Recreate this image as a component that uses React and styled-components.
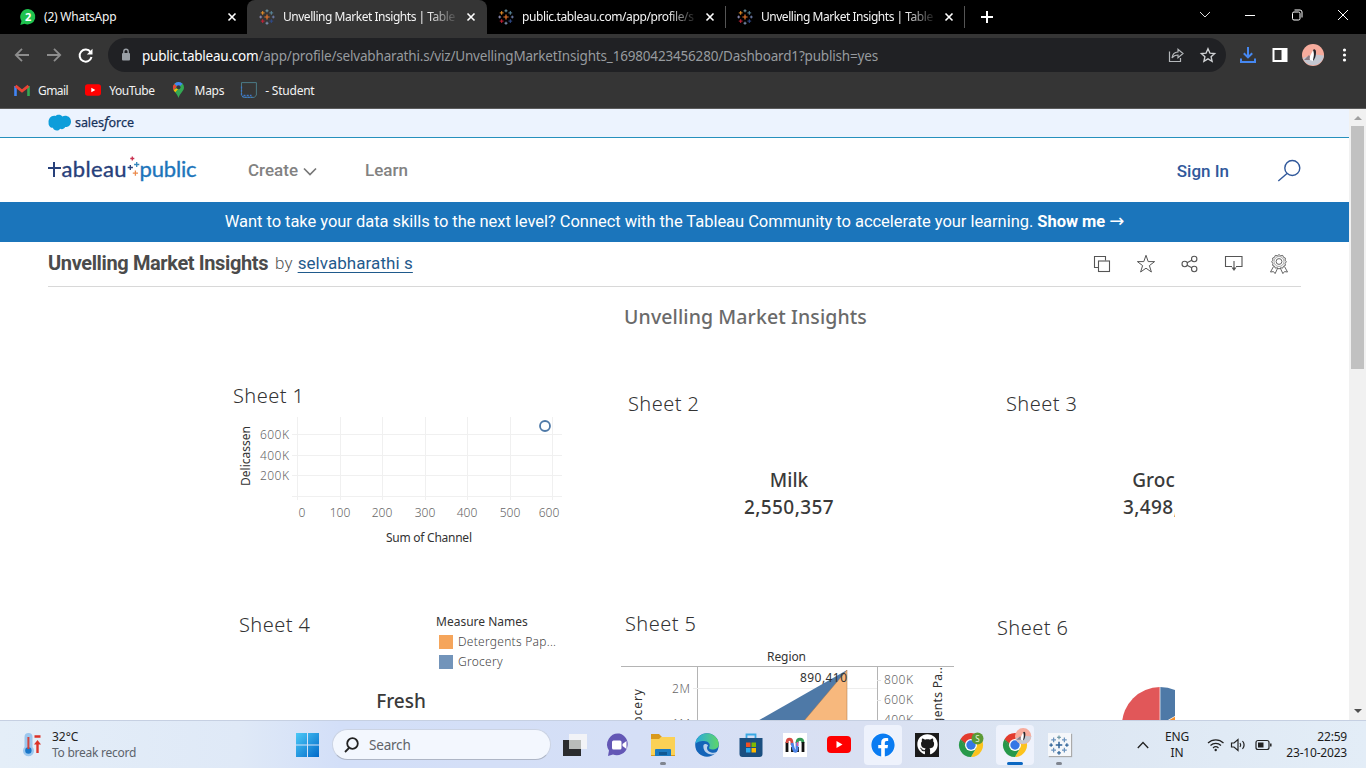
import React from 'react';
import styled, { createGlobalStyle } from 'styled-components';
import { FaGithub, FaFacebook } from 'react-icons/fa';

const ui = '"Noto Sans", "Open Sans", sans-serif';
const benton = 'Roboto, "Liberation Sans", sans-serif';

const Global = createGlobalStyle`
  * { box-sizing: border-box; }
  body { margin: 0; overflow: hidden; background: #fff; font-family: ${ui}; }
  svg { display: block; flex: none; overflow: visible; }
`;

const Screen = styled.div`
  width: 1366px; height: 768px; overflow: hidden;
  display: flex; flex-direction: column;
`;

/* ---------- browser chrome ---------- */
const TabStrip = styled.div`
  height: 34px; background: #000; display: flex; flex: none; color: #fff;
`;
const Tab = styled.div`
  width: ${p => p.$w}px; height: 34px; display: flex; align-items: center;
  padding: 0 ${p => p.$pr}px 0 ${p => p.$pl}px; background: ${p => (p.$active ? '#353535' : '#000')};
  border-radius: ${p => (p.$active ? '8px 8px 0 0' : '0')};
  border-right: ${p => (p.$sep ? '1px solid #4a4a4a' : '0')};
  border-image: ${p => (p.$sep ? 'linear-gradient(#000 20%, #555 20%, #555 80%, #000 80%) 1' : 'none')};
`;
const TabTitle = styled.div`
  flex: 1; margin-left: 8px; font-size: 12px; line-height: 18px; white-space: nowrap;
  letter-spacing: ${p => p.$ls}px; color: #f4f4f4;
  -webkit-mask-image: ${p => (p.$fade ? 'linear-gradient(90deg,#000 145px,transparent 176px)' : 'none')};
`;
const CloseWrap = styled.div`margin-left: 8px; width: 10px; display: flex; justify-content: center;`;
const NewTab = styled.div`width: 44px; display: flex; align-items: center; justify-content: center;`;
const WindowControls = styled.div`
  margin-left: auto; display: flex; height: 29px; align-items: center; gap: 33px; padding-right: 17px;
`;
const Toolbar = styled.div`
  height: 38px; flex: none; background: #353535; display: flex; align-items: flex-end; padding-left: 14px;
`;
const NavIcons = styled.div`display: flex; align-items: center; height: 34px; gap: 16px; width: 94px;`;
const Omnibox = styled.div`
  height: 34px; width: 1118px; border-radius: 17px; background: #202124; display: flex; align-items: center;
  padding: 0 10px 0 12px;
`;
const Url = styled.div`
  margin-left: 10px; padding-top: 1px; font-size: 13.5px; color: #979b9f; letter-spacing: ${p => p.$ls}px; white-space: nowrap; flex: 1;
  b { font-weight: 400; color: #fff; letter-spacing: -0.24px; }
`;
const OmniActions = styled.div`display: flex; gap: 16px; align-items: center;`;
const ToolIcons = styled.div`
  display: flex; align-items: center; height: 34px; gap: 14px; padding-left: 14px;
  svg:first-child { margin-right: 2px; }
`;
const Bookmarks = styled.div`
  height: 37px; flex: none; background: #353535; border-bottom: 1px solid #5b5b5b; display: flex;
  align-items: center; padding: 0 0 0 14px; color: #f2f2f2; font-size: 12px;
`;
const Bookmark = styled.div`
  display: flex; align-items: center; gap: ${p => p.$gap || 8}px; margin-right: ${p => p.$mr}px;
  letter-spacing: ${p => p.$ls || 0}px; white-space: nowrap;
`;

/* ---------- page ---------- */
const Body = styled.div`flex: 1; min-height: 0; display: flex;`;
const Page = styled.div`width: 1349px; background: #fff; display: flex; flex-direction: column; overflow: hidden;`;
const ScrollTrack = styled.div`
  width: 17px; background: #f1f1f1; display: flex; flex-direction: column; align-items: center; padding: 7px 0;
`;
const ScrollThumb = styled.div`width: 13px; height: 243px; background: #c1c1c1; margin: 6px 0 auto; `;
const SalesBar = styled.div`
  height: 29px; flex: none; background: #ecf3fe; border-bottom: 1px solid #2690bd; padding: 5px 0 0 48px;
`;
const Header = styled.div`
  height: 64px; flex: none; display: flex; align-items: center; padding: 0 48px; font-family: ${benton};
`;
const NavLink = styled.div`
  display: flex; align-items: center; gap: 5px; font-size: 17px; font-weight: 500; color: ${p => p.$c || '#828282'};
  margin-left: ${p => p.$ml}; margin-right: ${p => p.$mr || 0}px; padding-top: ${p => p.$pt || 0}px;
`;
const Banner = styled.div`
  height: 40px; flex: none; background: #1b75bb; color: #fff; font: 400 16.5px/39px ${benton};
  text-align: center; letter-spacing: ${p => p.$ls}px; white-space: nowrap;
  b { font-weight: 700; }
  span { font: 400 18px/1 "DejaVu Sans", sans-serif; }
`;
const VizHead = styled.div`
  height: 45px; flex: none; margin: 0 48px; border-bottom: 1px solid #d8d8d8; display: flex; align-items: center;
  font-family: ${benton}; color: #555; padding-right: 12px;
`;
const VizTitle = styled.h1`margin: 0 7px 3px 0; font-size: 20px; line-height: 24px; font-weight: 700; color: #4b4b4b; letter-spacing: ${p => p.$ls}px;`;
const Byline = styled.div`
  font-size: 17px; font-weight: 300; letter-spacing: ${p => p.$ls}px; margin-bottom: 3px;
  a { color: #1f5a8c; font-weight: 400; text-decoration: underline; text-underline-offset: 3px; margin-left: 1px; letter-spacing: 0.07px; }
`;
const VizActions = styled.div`margin-left: auto; display: flex; gap: 25px; align-items: center;`;
const Viz = styled.div`
  width: 1001px; flex: 1; min-height: 0; margin: 0 auto; overflow: hidden; display: flex; flex-direction: column; font-family: ${ui};
`;
const DashTitle = styled.div`
  width: 1143px; height: 82px; flex: none; padding-top: 16px; text-align: center; font-size: 19.5px; font-weight: 500; line-height: 28px; color: #6a6a6a;
  letter-spacing: ${p => p.$ls}px;
`;
const Row = styled.div`display: flex; flex: none; height: ${p => p.$h}px; width: 1143px; padding-left: 46px;`;
const Sheet = styled.section`
  width: ${p => p.$w}px; flex: none; padding: ${p => p.$pt}px 0 0 ${p => p.$pl}px; overflow: hidden;
`;
const SheetTitle = styled.h2`
  margin: 0 0 0 ${p => p.$ml || 0}px; font: 300 20px/28px ${ui}; color: #333; letter-spacing: 0.45px; white-space: nowrap;
`;
const Metric = styled.div`
  width: ${p => p.$w}px; padding-top: ${p => p.$pt}px; text-align: center; font-size: 19px; font-weight: 500; line-height: 27px; color: #3a3a3a;
`;
const Figure = styled.div`letter-spacing: 0.4px;`;
const SheetHead = styled.div`display: flex; justify-content: space-between; padding-right: ${p => p.$pr}px;`;
const Legend = styled.div`display: flex; flex-direction: column; width: 122px; padding-top: 1px; font-size: 12px; line-height: 20px; color: #333;`;
const LegendItem = styled.div`
  display: flex; align-items: center; gap: 5px; padding-left: 3px; color: #444; font-weight: 300; white-space: nowrap;
  letter-spacing: 0.27px;
  &::before { content: ''; width: 14px; height: 14px; background: ${p => p.$c}; }
`;
const PieSlot = styled.div`padding: 45px 0 0 125px;`;

/* ---------- taskbar ---------- */
const Taskbar = styled.div`
  height: 48px; flex: none; display: flex; align-items: center; border-top: 1px solid #c6d0e2;
  background: linear-gradient(90deg, #e4eef8 0, #dfe9f7 240px, #d3dff8 340px, #d5dff6 640px, #d9e0f2 860px, #dde7f3 1080px, #e3edf7 1366px);
`;
const Weather = styled.div`display: flex; align-items: center; gap: 10px; padding-left: 22px; width: 294px; color: #222; font-size: 12px; line-height: 16px;`;
const Muted = styled.div`color: #5c636b; letter-spacing: ${p => p.$ls || 0}px;`;
const SearchPill = styled.div`
  width: 219px; height: 31px; margin-left: 12px; border-radius: 16px; background: #f3f7fe; border: 1px solid #cbd3e3;
  border-bottom-color: #aeb6c6; display: flex; align-items: center; gap: 10px; padding-left: 11px; color: #606368; font-size: 13.5px;
  letter-spacing: -0.2px;
`;
const Apps = styled.div`display: flex; gap: 6px; margin-left: 5px;`;
const AppTile = styled.div`
  width: 38px; height: 40px; border-radius: 4px; display: flex; flex-direction: column; align-items: center; justify-content: center; position: relative;
  background: ${p => (p.$on ? '#eef2fc' : 'transparent')};
  &::after {
    content: ''; position: absolute; bottom: 0; height: 3px; border-radius: 2px;
    width: ${p => (p.$bar ? 16 : p.$dot ? 6 : 0)}px; background: ${p => (p.$bar ? '#0b67c2' : '#80858f')};
  }
`;
const FaFb = styled.span`color: #0a7cf2; background: #fff; border-radius: 50%; line-height: 0;`;
const GitHubTile = styled.span`width: 24px; height: 24px; background: #1b1b1b; color: #fff; display: flex; align-items: center; justify-content: center;`;
const TableauTile = styled.span`width: 23px; height: 23px; background: #f5f7fa; box-shadow: 1px 1px 1px #aaa; display: flex; align-items: center; justify-content: center;`;
const Tray = styled.div`
  margin-left: auto; display: flex; align-items: center; padding-right: 19px; color: #1c1c1c; font-size: 12px; line-height: 16px;
`;
const Lang = styled.div`margin: 0 19px 0 16px; width: 24px; display: flex; flex-direction: column; align-items: center; letter-spacing: ${p => p.$ls || 0}px;`;
const Clock = styled.div`width: 77px; letter-spacing: ${p => p.$ls || 0}px; white-space: nowrap; display: flex; flex-direction: column; align-items: flex-end;`;

/* ---------- icons ---------- */
const Close = () => (
  <svg width="8" height="8" viewBox="0 0 8 8" stroke="#fff" strokeWidth="1.6"><path d="M.5.5l7 7M7.5.5l-7 7" /></svg>
);
const plus = (x, y, r) => `M${x - r} ${y}H${x + r}M${x} ${y - r}V${y + r}`;
const TableauMark = ({ size = 16, blue }) => (
  <svg width={size} height={size} viewBox="0 0 16 16" fill="none" strokeWidth="1">
    <path d={plus(8, 8, 2.6)} stroke={blue ? '#2f6398' : '#e8762c'} strokeWidth="1.2" />
    <path d={plus(8, 1.8, 1.5)} stroke="#7199a6" />
    <path d={plus(8, 14.2, 1.5)} stroke={blue ? '#2f6398' : '#8196b8'} />
    <path d={plus(1.7, 8, 1.4)} stroke={blue ? '#2f6398' : '#8c8cb5'} />
    <path d={plus(14.3, 8, 1.4)} stroke={blue ? '#2f6398' : '#6e7da8'} />
    <path d={plus(3.7, 3.9, 1.9)} stroke={blue ? '#6b93bd' : '#eb9129'} />
    <path d={plus(12.3, 3.9, 1.9)} stroke={blue ? '#6b93bd' : '#59879b'} />
    <path d={plus(3.7, 12.1, 1.9)} stroke={blue ? '#6b93bd' : '#c72037'} />
    <path d={plus(12.3, 12.1, 1.9)} stroke={blue ? '#6b93bd' : '#2f4b8c'} />
  </svg>
);
const WhatsApp = () => (
  <svg width="16" height="16" viewBox="0 0 16 16">
    <path d="M8.2 0A7.7 7.7 0 1 1 4.5 14.7L.3 16l1.2-4A7.8 7.8 0 0 1 8.2 0z" fill="#1fc24f" />
    <text x="8.2" y="12" textAnchor="middle" fontSize="11" fontWeight="700" fill="#fff" fontFamily="Noto Sans">2</text>
  </svg>
);
const Penguin = ({ size = 22 }) => (
  <svg width={size} height={size} viewBox="0 0 22 22">
    <circle cx="11" cy="11" r="11" fill="#f7ac9d" />
    <path d="M0.700 14a11 11 0 0 0 20.600 0L22 11.500l-9-1z" fill="#c3c7d1" />
    <path d="M2 16l5-5 3 5z" fill="#8b7b83" />
    <path d="M11 6.500c-2 3-4 7-3 9.500l3 1c2-3 3-7 1-11z" fill="#fff" />
    <path d="M11 6c1-1.500 3-1 3 2 0 4-1 7-3 9 0-3 2-6 0-11z" fill="#25252b" />
  </svg>
);
const ChromeLogo = ({ children }) => (
  <svg width="26" height="26" viewBox="0 0 26 26">
    <path d="M13 13L2.600 7A12 12 0 0 1 23.400 7z" fill="#e33b2e" />
    <path d="M13 7H23.400A12 12 0 0 1 13 25l5.200-9z" fill="#fcc31e" />
    <path d="M2.600 7A12 12 0 0 0 13 25l5.200-9L8 15.800z" fill="#27994a" />
    <path d="M2.600 7L8 16l5-3V7z" fill="#e33b2e" />
    <path d="M2.600 7L7.800 16 10 14z" fill="#27994a" />
    <circle cx="13" cy="13" r="6" fill="#fff" />
    <circle cx="13" cy="13" r="4.700" fill="#3577e5" />
    {children}
  </svg>
);
const YouTube = ({ w, h }) => (
  <svg width={w} height={h} viewBox="0 0 24 17">
    <rect width="24" height="17" rx="4" fill="#f00" /><path d="M9.500 5v7l6-3.500z" fill="#fff" />
  </svg>
);
const Logo = () => (
  <svg width="149" height="30" viewBox="0 0 149 30">
    <g fill="none">
      <path d="M0 13H13M6 7V22" stroke="#27407a" strokeWidth="2" />
      <path d={plus(84.3, 3.5, 2)} stroke="#c9304f" strokeWidth="1.300" />
      <path d={plus(82.3, 12.5, 2.6)} stroke="#27407a" strokeWidth="1.300" />
      <path d={plus(88.7, 9.5, 2.6)} stroke="#3487bd" strokeWidth="1.300" />
      <path d={plus(87.4, 18.2, 2.6)} stroke="#eb8a4b" strokeWidth="1.300" />
    </g>
    <g fontFamily="Lato" fontSize="22" fontWeight="400" strokeWidth=".35">
      <text x="13.500" y="22" textLength="65" fill="#27407a" stroke="#27407a">ableau</text>
      <text x="91.500" y="22" textLength="57" fill="#1d75bb" stroke="#1d75bb">public</text>
    </g>
  </svg>
);
const Salesforce = () => (
  <svg width="88" height="18" viewBox="0 0 88 18">
    <path d="M.600 9C0 4.500 3.500 1 7.500 2 9 .2 13 0 14.300 2.600c3.500-2 8.700.2 8.700 5 0 3.800-3 6-5.800 5.400-1 2-3.300 2.700-5 1.700-2 3-6.500 2-7.300-.9C2.400 14 .3 11.500.6 9z" fill="#0d9dda" />
    <g fill="#16325c" stroke="#16325c" strokeWidth=".25" fontFamily="Noto Sans" fontSize="12.500">
      <text x="27" y="12.500" textLength="29">sales</text>
      <text x="56" y="13" fontStyle="italic" fontSize="14">f</text>
      <text x="60.500" y="12.500" textLength="25.500">orce</text>
    </g>
  </svg>
);

const tick = { fontFamily: 'Noto Sans', fontSize: 12, fontWeight: 300, fill: '#666' };
const label = { fontFamily: 'Noto Sans', fontSize: 12, fill: '#333' };

const ScatterChart = () => (
  <svg width="340" height="150" viewBox="0 0 340 150">
    <g stroke="#f0f0f0" strokeWidth="1">
      {[64.500, 107.500, 149.500, 192.500, 234.500, 277.500, 319.500].map(x => <path key={x} d={`M${x} 7V90`} />)}
      {[24.500, 45.500, 65.500, 86.500].map(y => <path key={y} d={`M59 ${y}H329`} />)}
    </g>
    {['600K', '400K', '200K'].map((t, i) => (
      <text key={t} {...tick} x="27" y={29 + i * 20.700} textLength="29">{t}</text>
    ))}
    {[['0', 69], ['100', 107], ['200', 149], ['300', 192], ['400', 234], ['500', 277], ['600', 316]].map(([t, x]) => (
      <text key={t} {...tick} x={x} y="107" textAnchor="middle">{t}</text>
    ))}
    <text {...label} x="153" y="132" textLength="86">Sum of Channel</text>
    <text {...label} transform="translate(17 76) rotate(-90)" textLength="60">Delicassen</text>
    <circle cx="312" cy="16" r="5" fill="#fff" stroke="#4e79a7" strokeWidth="1.800" />
  </svg>
);
const AreaChart = () => (
  <svg width="333" height="82" viewBox="0 0 333 82">
    <text {...label} x="146" y="23" textLength="39">Region</text>
    <g stroke="#b4b4b4"><path d="M0 28.500H333M76.500 28V90M256.500 28V90" /></g>
    <path d="M72 50.500H256" stroke="#ededed" />
    <path d="M226 32L126 89H226z" fill="#4e79a7" />
    <path d="M226 32L177 90H226z" fill="#f7b87d" stroke="#a5744b" strokeWidth=".5" />
    <path d="M256 42.500h4M256 62.500h4M256 82.500h4" stroke="#e4e4e4" />
    <text {...tick} x="51" y="55" textLength="18">2M</text>
    <text {...tick} x="51" y="90" textLength="18">1M</text>
    <text {...label} x="179" y="44" textLength="47">890,410</text>
    {['800K', '600K', '400K'].map((t, i) => <text key={t} {...tick} x="263" y={46 + i * 20} textLength="29">{t}</text>)}
    <text {...label} transform="translate(21 101) rotate(-90)" textLength="50">Grocery</text>
    <text {...label} transform="translate(321 120) rotate(-90)" textLength="91">Detergents Pa..</text>
  </svg>
);
const PieChart = () => (
  <svg width="76" height="76" viewBox="0 0 76 76">
    <path d="M38 38V0A38 38 0 0 0 38 76z" fill="#e15759" />
    <path d="M38 38V0A38 38 0 0 1 71 19z" fill="#4e79a7" />
    <path d="M38 38L71 19A38 38 0 0 1 38 76z" fill="#f28e2b" />
    <path d="M38 0V38L71 19" stroke="#fff" strokeWidth=".7" fill="none" />
  </svg>
);
const VizIcons = () => (
  <VizActions>
    <svg width="18" height="18" viewBox="0 0 18 18" fill="none" stroke="#555" strokeWidth="1.100"><path d="M5.500 12.500H1.500V1.500H12.500V5.500" /><rect x="5.500" y="6" width="11" height="10.500" /></svg>
    <svg width="20" height="20" viewBox="0 0 20 20" fill="none" stroke="#555" strokeWidth="1"><path d="M10 1.300l2.200 6.300h6.400l-5.200 4 2 6.400L10 14.200 4.600 18l2-6.400-5.200-4h6.400z" /></svg>
    <svg width="18" height="18" viewBox="0 0 18 18" fill="none" stroke="#555" strokeWidth="1.100"><circle cx="3.700" cy="9" r="2.700" /><circle cx="13.200" cy="4" r="2.700" /><circle cx="13.200" cy="14" r="2.700" /><path d="M6 7.800l4.800-2.600M6 10.200l4.800 2.600" /></svg>
    <svg width="20" height="18" viewBox="0 0 20 18" fill="none" stroke="#555" strokeWidth="1.100"><path d="M8 11.500H1.500V1.500H18V11.500H12M10 6V14" /><path d="M7.500 12.500h5L10 16z" fill="#555" stroke="none" /></svg>
    <svg width="20" height="20" viewBox="0 0 20 20" fill="none" stroke="#555" strokeWidth=".9">
      <circle cx="10" cy="7.500" r="2.900" />
      <path d="M10 .6l1.700 1.200 2-.4.8 1.900 1.900.8-.3 2.100 1.200 1.600-1.200 1.600.3 2-1.900.8-.8 1.900-2-.3L10 15l-1.700-1.200-2 .3-.8-1.900-1.900-.8.3-2-1.200-1.600 1.200-1.600-.3-2.100 1.900-.8.8-1.900 2 .4z" />
      <circle cx="10" cy="7.500" r="5" strokeWidth=".5" />
      <path d="M4.500 12.500L1.500 18l3-.4 1.600 2 2.600-5.500M15.500 12.500l3 5.500-3-.4-1.600 2-2.600-5.500" />
    </svg>
  </VizActions>
);

const TABLEAU_TITLE = 'Unvelling Market Insights | Table';

export default function App() {
  return (
    <Screen>
      <Global />
      <TabStrip>
        <Tab $w={247} $pl={20} $pr={10}><WhatsApp /><TabTitle $ls={-0.22}>(2) WhatsApp</TabTitle><CloseWrap><Close /></CloseWrap></Tab>
        <Tab $w={240} $pl={12} $pr={11} $active><TableauMark /><TabTitle $fade $ls={-0.47}>{TABLEAU_TITLE}</TabTitle><CloseWrap><Close /></CloseWrap></Tab>
        <Tab $w={239} $pl={11} $pr={10} $sep><TableauMark /><TabTitle $fade $ls={-0.4}>public.tableau.com/app/profile/s</TabTitle><CloseWrap><Close /></CloseWrap></Tab>
        <Tab $w={239} $pl={11} $pr={10} $sep><TableauMark /><TabTitle $fade $ls={-0.47}>{TABLEAU_TITLE}</TabTitle><CloseWrap><Close /></CloseWrap></Tab>
        <NewTab><svg width="12" height="12" viewBox="0 0 12 12" stroke="#fff" strokeWidth="2"><path d="M6 0V12M0 6H12" /></svg></NewTab>
        <WindowControls>
          <svg width="12" height="10" viewBox="0 0 12 10" fill="none" stroke="#ddd"><path d="M2 2l5 5 5-5" /></svg>
          <svg width="14" height="10" viewBox="0 0 14 10" stroke="#fff"><path d="M2 5.500h10" /></svg>
          <svg width="14" height="12" viewBox="0 0 14 12" fill="none" stroke="#fff"><rect x="2.500" y="3" width="7.500" height="8" rx="1.500" /><path d="M4.500 1h5.500a2 2 0 0 1 2 2v5.500" /></svg>
          <svg width="12" height="12" viewBox="0 0 12 12" stroke="#fff"><path d="M1 1l10 10M11 1L1 11" /></svg>
        </WindowControls>
      </TabStrip>
      <Toolbar>
        <NavIcons>
          <svg width="16" height="14" viewBox="0 0 16 14" fill="none" stroke="#8d8d8d" strokeWidth="1.800"><path d="M15 7H2M8 .8L1.800 7 8 13.200" /></svg>
          <svg width="16" height="14" viewBox="0 0 16 14" fill="none" stroke="#8d8d8d" strokeWidth="1.800"><path d="M1 7h13M8 .8L14.200 7 8 13.200" /></svg>
          <svg width="15" height="15" viewBox="0 0 15 15" fill="none" stroke="#fff" strokeWidth="2"><path d="M12.600 4.200A6 6 0 1 0 13.500 9" /><path d="M14.500.8v5.700H8.800z" fill="#fff" stroke="none" /></svg>
        </NavIcons>
        <Omnibox>
          <svg width="12" height="14" viewBox="0 0 12 14"><rect x="2" y="5" width="8" height="7.500" rx="1" fill="#9aa0a6" /><path d="M3.800 5.500V3.500a2.200 2.200 0 0 1 4.400 0v2" fill="none" stroke="#9aa0a6" strokeWidth="1.400" /></svg>
          <Url $ls={-0.18}><b>public.tableau.com</b>/app/profile/selvabharathi.s/viz/UnvellingMarketInsights_16980423456280/Dashboard1?publish=yes</Url>
          <OmniActions>
            <svg width="16" height="16" viewBox="0 0 16 16" fill="none" stroke="#b4b7ba" strokeWidth="1.200"><path d="M1.500 4.500V14.500H12.500V11" /><path d="M4 11c.4-4 2.500-5.800 6-6V2.200l5 4.300-5 4.300V8C7.500 8 5.500 8.800 4 11z" /></svg>
            <svg width="16" height="16" viewBox="0 0 24 24" fill="none" stroke="#d0d2d4" strokeWidth="2"><path d="M12 2.500l2.900 6.600 7.100.7-5.400 4.700 1.600 7L12 17.800 5.800 21.500l1.600-7L2 9.800l7.100-.7z" /></svg>
          </OmniActions>
        </Omnibox>
        <ToolIcons>
          <svg width="16" height="16" viewBox="0 0 16 16" fill="none" stroke="#4688f1" strokeWidth="2"><path d="M8 0v10M3.800 6.200L8 10.400l4.200-4.200M1 11.500V15H15V11.500" /></svg>
          <svg width="16" height="14" viewBox="0 0 16 14"><path d="M1.500 1H14.500V13H1.500z" fill="none" stroke="#fff" strokeWidth="2" /><path d="M9.500 1h5v12h-5z" fill="#fff" /></svg>
          <Penguin />
          <svg width="14" height="14" viewBox="0 0 14 14" fill="#fff"><circle cx="6.500" cy="2" r="1.600" /><circle cx="6.500" cy="7" r="1.600" /><circle cx="6.500" cy="12" r="1.600" /></svg>
        </ToolIcons>
      </Toolbar>
      <Bookmarks>
        <Bookmark $mr={17} $ls={-0.55}>
          <svg width="16" height="12" viewBox="0 0 16 12"><path d="M1.500 12V2" stroke="#4285f4" strokeWidth="2.600" /><path d="M14.500 12V2" stroke="#34a853" strokeWidth="2.600" /><path d="M1.500 1.800L8 7l6.500-5.200" fill="none" stroke="#ea4335" strokeWidth="2.800" /></svg>
          Gmail
        </Bookmark>
        <Bookmark $mr={17} $ls={-0.45}><YouTube w={16} h={12} />YouTube</Bookmark>
        <Bookmark $mr={17} $gap={10} $ls={-0.25}>
          <svg width="13" height="16" viewBox="0 0 13 16"><path d="M6.500 0A5.500 5.500 0 0 0 1 5.500C1 9 5 11 6.500 16 8 11 12 9 12 5.500A5.500 5.500 0 0 0 6.500 0z" fill="#34a853" /><path d="M6.500 0A5.500 5.500 0 0 0 2.300 2L6.500 5.500 10.500 1.800A5.400 5.400 0 0 0 6.500 0z" fill="#4285f4" /><path d="M2.300 2A5.500 5.500 0 0 0 1.500 8L5 4.500z" fill="#ea4335" /><path d="M1.500 8l1.700 2.200L8 5z" fill="#fbbc04" /><circle cx="6.500" cy="5.300" r="2" fill="#35373a" /></svg>
          Maps
        </Bookmark>
        <Bookmark $mr={0} $gap={8} $ls={-0.22}>
          <svg width="16" height="16" viewBox="0 0 16 16" fill="none"><path d="M.5 2V.6H15.400V13l-2 2.400H2.500L.5 13.500z" stroke="#4a7a86" /><path d="M.5 4.500V13l2 2.400h9M2.500 13.500h8" stroke="#3e78c8" strokeDasharray="2 1.200" strokeWidth="1.300" /></svg>
          - Student
        </Bookmark>
      </Bookmarks>
      <Body>
        <Page>
          <SalesBar><Salesforce /></SalesBar>
          <Header>
            <Logo />
            <NavLink $ml="51px">Create<svg width="14" height="9" viewBox="0 0 14 9" fill="none" stroke="#777" strokeWidth="1.700"><path d="M1 2.500l6 6 6-6" /></svg></NavLink>
            <NavLink $ml="48px">Learn</NavLink>
            <NavLink $ml="auto" $c="#30589b" $mr={48} $pt={2}>Sign In</NavLink>
            <svg width="24" height="24" viewBox="0 0 24 24" fill="none" stroke="#30589b" strokeWidth="1.400"><circle cx="15.300" cy="10" r="7.500" /><path d="M10 15.500L1.300 23" /></svg>
          </Header>
          <Banner $ls={-0.04}>Want to take your data skills to the next level? Connect with the Tableau Community to accelerate your learning. <b>Show me</b> <span>→</span></Banner>
          <VizHead>
            <VizTitle $ls={-0.38}>Unvelling Market Insights</VizTitle>
            <Byline $ls={0}>by <a>selvabharathi s</a></Byline>
            <VizIcons />
          </VizHead>
          <Viz>
            <DashTitle $ls={0.1}>Unvelling Market Insights</DashTitle>
            <Row $h={228}>
              <Sheet $w={395} $pt={13} $pl={13}><SheetTitle>Sheet 1</SheetTitle><ScatterChart /></Sheet>
              <Sheet $w={378} $pt={21} $pl={13}><SheetTitle>Sheet 2</SheetTitle><Metric $w={322} $pt={49}>Milk<Figure>2,550,357</Figure></Metric></Sheet>
              <Sheet $w={324} $pt={21} $pl={13}><SheetTitle>Sheet 3</SheetTitle><Metric $w={324} $pt={49}>Grocery<Figure>3,498,562</Figure></Metric></Sheet>
            </Row>
            <Row $h={123}>
              <Sheet $w={395} $pt={14} $pl={19}>
                <SheetHead $pr={57}>
                  <SheetTitle>Sheet 4</SheetTitle>
                  <Legend>Measure Names<LegendItem $c="#f5a55b">Detergents Pap...</LegendItem><LegendItem $c="#7294ba">Grocery</LegendItem></Legend>
                </SheetHead>
                <Metric $w={324} $pt={16}>Fresh</Metric>
              </Sheet>
              <Sheet $w={374} $pt={13} $pl={6}>
                <SheetTitle $ml={4}>Sheet 5</SheetTitle><AreaChart />
              </Sheet>
              <Sheet $w={328} $pt={17} $pl={8}><SheetTitle>Sheet 6</SheetTitle><PieSlot><PieChart /></PieSlot></Sheet>
            </Row>
          </Viz>
        </Page>
        <ScrollTrack>
          <svg width="8" height="4" viewBox="0 0 8 4"><path d="M0 4h8L4 0z" fill="#a0a0a0" /></svg>
          <ScrollThumb />
          <svg width="8" height="4" viewBox="0 0 8 4"><path d="M0 0h8L4 4z" fill="#505050" /></svg>
        </ScrollTrack>
      </Body>
      <Taskbar>
        <Weather>
          <svg width="20" height="24" viewBox="0 0 20 24"><path d="M2.500 4a4 4 0 0 1 8 0v10a5.500 5.500 0 1 1-8 0z" fill="#9cc7ee" /><circle cx="6.400" cy="17.500" r="3.200" fill="#1977c9" /><path d="M6.400 4v12" stroke="#d3453f" strokeWidth="2" /><path d="M12.500 3.500h6M15.500 20V9" stroke="#dc3328" strokeWidth="2.400" /><path d="M12 11.500l3.500-4.500 3.500 4.500z" fill="#dc3328" /></svg>
          <div>32°C<Muted $ls={-0.26}>To break record</Muted></div>
        </Weather>
        <svg width="26" height="24" viewBox="0 0 26 24">
          <defs><linearGradient id="win" x1="0" y1="0" x2="1" y2="1"><stop stopColor="#4cc9f7" /><stop offset="1" stopColor="#0169c9" /></linearGradient></defs>
          <path d="M2 0H13V11.500H2zM14 0H25V11.500H14zM2 12.500H13V24H2zM14 12.500H25V24H14z" fill="url(#win)" />
        </svg>
        <SearchPill>
          <svg width="15" height="16" viewBox="0 0 15 16" fill="none" stroke="#222" strokeWidth="1.800"><circle cx="8.500" cy="6.500" r="5.300" /><path d="M5 11L1 15" /></svg>
          Search
        </SearchPill>
        <Apps>
          <AppTile><svg width="24" height="22" viewBox="0 0 24 22"><path d="M0 6h18v16H0z" fill="#2b2c2e" /><path d="M6 0h18v15H6z" fill="#f7f7f7" opacity=".85" /><path d="M6 6h12v9H6z" fill="#b9bcba" /></svg></AppTile>
          <AppTile><svg width="24" height="24" viewBox="0 0 24 24"><path d="M12.500.5A11 11 0 1 1 6 21.500L1 23l1-5.500A11 11 0 0 1 12.500.5z" fill="#6357b5" /><rect x="5" y="7.500" width="9.500" height="9" rx="1.500" fill="#fff" /><path d="M15.500 11l4-3v8l-4-3z" fill="#fff" /></svg></AppTile>
          <AppTile $dot><svg width="24" height="22" viewBox="0 0 24 22"><path d="M0 0h8l3 3h13v19H0z" fill="#d9991c" /><path d="M0 5h8l2-2h14v18H0z" fill="#fbd155" /><path d="M5 15h14a1 1 0 0 1 1 1v6H4v-6a1 1 0 0 1 1-1z" fill="#1c7ac0" /><path d="M8 18h8v3H8z" fill="#105892" /></svg></AppTile>
          <AppTile><svg width="24" height="24" viewBox="0 0 24 24">
            <defs><linearGradient id="edge"><stop stopColor="#28a9e0" /><stop offset="1" stopColor="#5fd668" /></linearGradient></defs>
            <circle cx="12" cy="12" r="11.800" fill="#1464b8" /><path d="M.3 11A11.800 11.800 0 0 1 23.800 11c0 4-3 5.500-6.500 5.500-2.500 0-4-1-3-2.500C16 11 13 8 9 8 4.500 8 1 9.500.3 11z" fill="url(#edge)" /><path d="M8.500 12c-1 5 3 9.500 8.500 9.500 2.500 0 4.500-1.500 5-2.500-4 2-10 0-10-4 0-1 .3-1.800 1-2.500-1-1.500-3.500-2-4.500-.5z" fill="#d7e3f4" opacity=".85" />
          </svg></AppTile>
          <AppTile><svg width="24" height="24" viewBox="0 0 24 24"><path d="M7.500 6V1.500h9V6" fill="none" stroke="#3aa9e4" strokeWidth="1.800" /><path d="M.5 5h23v16a3 3 0 0 1-3 3h-17a3 3 0 0 1-3-3z" fill="#1b4f80" /><path d="M7 9.500h4.500v4.500H7z" fill="#f25022" /><path d="M12.500 9.500H17v4.500h-4.500z" fill="#7fba00" /><path d="M7 15h4.500v4.500H7z" fill="#2ea9ec" /><path d="M12.500 15H17v4.500h-4.500z" fill="#ffb900" /></svg></AppTile>
          <AppTile><svg width="24" height="24" viewBox="0 0 24 24" fill="none" strokeWidth="2.800"><path d="M0 0h24v24H0z" fill="#fff" /><path d="M4 19V9M9.500 19v-5M14.500 19v-5" stroke="#111" /><path d="M4 10c0-5 5-5 5 0v2" stroke="#d94b44" /><path d="M9 10l1.500 6c1 3 3 3 3.500 0V9" stroke="#4b84e8" /><path d="M14 10c0-5 6-5 6 0" stroke="#349a55" /><path d="M20 9v10" stroke="#111" /><path d="M14.500 9v4" stroke="#e75a9a" strokeWidth="1.600" /></svg></AppTile>
          <AppTile><YouTube w={24} h={17} /></AppTile>
          <AppTile $on><FaFb><FaFacebook size={24} /></FaFb></AppTile>
          <AppTile><GitHubTile><FaGithub size={21} /></GitHubTile></AppTile>
          <AppTile><ChromeLogo><circle cx="19.500" cy="6.500" r="6" fill="#5b9a35" /><text x="19.500" y="9.500" fontSize="8" fill="#e8f3dd" textAnchor="middle" fontFamily="Noto Sans">S</text></ChromeLogo></AppTile>
          <AppTile $on $bar><ChromeLogo><g transform="translate(13 -4) scale(.74)"><Penguin /></g></ChromeLogo></AppTile>
          <AppTile $dot><TableauTile><TableauMark size={20} blue /></TableauTile></AppTile>
        </Apps>
        <Tray>
          <svg width="12" height="8" viewBox="0 0 12 8" fill="none" stroke="#222" strokeWidth="1.300"><path d="M.8 7L6 1.500 11.200 7" /></svg>
          <Lang $ls={-0.1}><span>ENG</span><span>IN</span></Lang>
          <svg width="62" height="14" viewBox="0 0 62 14" fill="none" stroke="#222" strokeWidth="1.200">
            <path d="M0 5A11 11 0 0 1 15.500 5M2.500 7.500a7.500 7.500 0 0 1 10.500 0M5 10a4 4 0 0 1 5.500 0" /><circle cx="7.700" cy="12" r="1.200" fill="#222" stroke="none" />
            <path d="M23.500 5h2.500l4-3.500v11L26 9h-2.500zM32 5c1 1.300 1 2.700 0 4M34.500 3c2 2.500 2 5.500 0 8" />
            <rect x="48" y="2.500" width="13" height="9" rx="2" /><path d="M50 4.500h5.500v5H50z" fill="#222" stroke="none" /><path d="M62.800 5.500v3" strokeWidth="1.500" />
          </svg>
          <Clock $ls={-0.2}><span>22:59</span><span>23-10-2023</span></Clock>
        </Tray>
      </Taskbar>
    </Screen>
  );
}
